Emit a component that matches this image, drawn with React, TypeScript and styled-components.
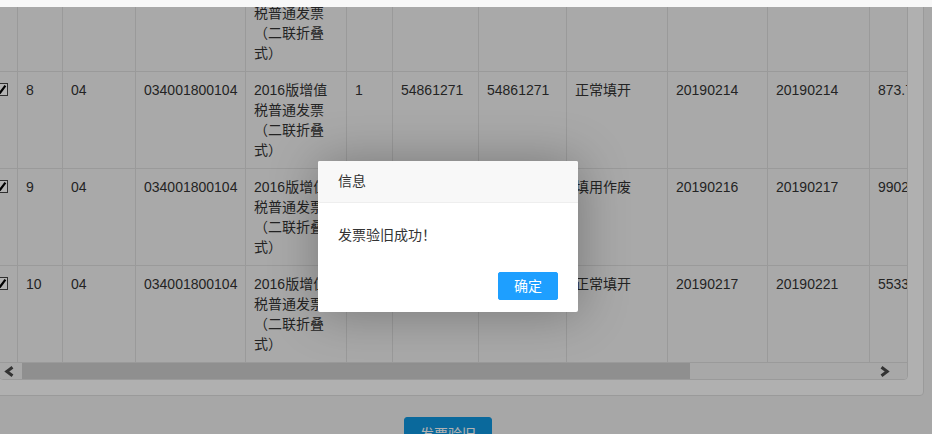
import React from 'react'
import styled, { createGlobalStyle } from 'styled-components'

const GlobalStyle = createGlobalStyle`
  * { box-sizing: border-box; }
  html, body {
    margin: 0;
    padding: 0;
    overflow: hidden;
    background: #f8f8f8;
  }
  body {
    font-family: "Liberation Sans", "Noto Sans CJK SC", sans-serif;
    font-size: 14px;
    color: #333;
    text-spacing-trim: space-all;
  }
`

const TopStrip = styled.div`
  height: 7px;
  background: #f8f8f8;
`

const Frame = styled.div`
  position: relative;
  height: 427px;
  overflow: hidden;
  background: #f0f0f0;
`

const Panel = styled.div`
  width: 941px;
  margin: -30px 0 0 -17px;
  padding: 15px;
  background: #fdfdfd;
  border: 1px solid #ddd;
  border-radius: 4px;
`

const TableBox = styled.div`
  border: 1px solid #ddd;
  border-radius: 4px;
  overflow: hidden;
  background: #fff;
`

const Viewport = styled.div`
  overflow: hidden;
`

const Grid = styled.div`
  display: grid;
  grid-template-columns: 32px 45px 73px 110px 101px 46px 86px 88px 101px 100px 102px 100px;
  width: max-content;
  margin: -19px 0 0 -14px;
`

const Cell = styled.div<{ wrap?: boolean }>`
  padding: 8px;
  line-height: 20px;
  background: #f3f3f3;
  border-right: 1px solid #ddd;
  border-bottom: 1px solid #ddd;
  white-space: ${({ wrap }) => (wrap ? 'normal' : 'nowrap')};
  overflow: hidden;
`

const CheckCell = styled(Cell)`
  padding-left: 9px;
`

const CheckBox = styled.span`
  display: block;
  width: 13px;
  height: 13px;
  margin-top: 3px;
  border: 1px solid #444;
  background: #fff;
  svg { display: block; }
`

const ScrollBar = styled.div`
  display: flex;
  height: 16px;
  background: #f1f1f1;
`

const ArrowButton = styled.div<{ width: number }>`
  display: flex;
  align-items: center;
  width: ${({ width }) => width}px;
  padding-left: 4px;
  flex: none;
  svg { display: block; }
`

const Thumb = styled.div<{ width: number }>`
  width: ${({ width }) => width}px;
  margin-left: 4px;
  background: #cdcdcd;
  flex: none;
`

const TrackRest = styled.div`
  flex: 1;
`

const Footer = styled.div`
  display: flex;
  justify-content: center;
  padding: 21px 36px 0 0;
`

const PrimaryButton = styled.button`
  height: 34px;
  padding: 0 15px;
  border: 1px solid #0f97e0;
  border-radius: 3px;
  background: #0f97e0;
  color: #fff;
  font-family: "Liberation Sans", "Noto Sans CJK SC", sans-serif;
  font-size: 14px;
  line-height: 32px;
`

const Shade = styled.div`
  position: absolute;
  inset: 0;
  background: rgba(0, 0, 0, 0.3);
`

const Dialog = styled.div`
  position: absolute;
  left: 318px;
  top: 154px;
  width: 260px;
  background: #fff;
  border-radius: 2px;
  box-shadow: 1px 1px 50px rgba(0, 0, 0, 0.3);
`

const DialogTitle = styled.div`
  height: 42px;
  line-height: 41px;
  padding: 0 80px 0 20px;
  background: #f8f8f8;
  border-bottom: 1px solid #eee;
  border-radius: 2px 2px 0 0;
  color: #333;
`

const DialogBody = styled.div`
  padding: 20px;
  line-height: 24px;
  color: #333;
`

const DialogActions = styled.div`
  display: flex;
  justify-content: flex-end;
  padding: 0 15px 12px;
`

const DialogButton = styled.button`
  height: 28px;
  margin: 5px 5px 0;
  padding: 0 15px;
  border: 1px solid #1e9fff;
  border-radius: 2px;
  background: #1e9fff;
  color: #fff;
  font-family: "Liberation Sans", "Noto Sans CJK SC", sans-serif;
  font-size: 14px;
  line-height: 26px;
`

type Row = {
  no: string
  status: string
  start: string
  end: string
  amount: string
  from: string
  to: string
}

const KIND = '2016版增值税普通发票（二联折叠式）'

const rows: Row[] = [
  { no: '7', from: '54861270', to: '54861270', status: '正常填开', start: '20190213', end: '20190214', amount: '1220.50' },
  { no: '8', from: '54861271', to: '54861271', status: '正常填开', start: '20190214', end: '20190214', amount: '873.79' },
  { no: '9', from: '54861272', to: '54861272', status: '填用作废', start: '20190216', end: '20190217', amount: '9902.91' },
  { no: '10', from: '54861273', to: '54861273', status: '正常填开', start: '20190217', end: '20190221', amount: '5533.98' }
]

function Tick() {
  return (
    <CheckBox>
      <svg width="11" height="11" viewBox="0 0 11 11">
        <path d="M1.8 5.6 L4.3 8.4 L9.4 1.6" fill="none" stroke="#000" strokeWidth="2.2" />
      </svg>
    </CheckBox>
  )
}

function Chevron({ dir }: { dir: 'left' | 'right' }) {
  const pts = dir === 'left' ? '8.5,1.2 2.8,5.5 8.5,9.8' : '1.5,1.2 7.2,5.5 1.5,9.8'
  return (
    <svg width="10" height="11" viewBox="0 0 10 11">
      <polyline points={pts} fill="none" stroke="#4a4a4a" strokeWidth="3" />
    </svg>
  )
}

export default function App() {
  return (
    <>
      <GlobalStyle />
      <TopStrip />
      <Frame>
        <Panel>
          <TableBox>
            <Viewport>
              <Grid>
                {rows.map(r => (
                  <React.Fragment key={r.no}>
                    <CheckCell><Tick /></CheckCell>
                    <Cell>{r.no}</Cell>
                    <Cell>04</Cell>
                    <Cell>034001800104</Cell>
                    <Cell wrap>{KIND}</Cell>
                    <Cell>1</Cell>
                    <Cell>{r.from}</Cell>
                    <Cell>{r.to}</Cell>
                    <Cell>{r.status}</Cell>
                    <Cell>{r.start}</Cell>
                    <Cell>{r.end}</Cell>
                    <Cell>{r.amount}</Cell>
                  </React.Fragment>
                ))}
              </Grid>
            </Viewport>
            <ScrollBar>
              <ArrowButton width={18}><Chevron dir="left" /></ArrowButton>
              <Thumb width={668} />
              <TrackRest />
              <ArrowButton width={31}><Chevron dir="right" /></ArrowButton>
            </ScrollBar>
          </TableBox>
        </Panel>
        <Footer>
          <PrimaryButton>发票验旧</PrimaryButton>
        </Footer>
        <Shade />
        <Dialog>
          <DialogTitle>信息</DialogTitle>
          <DialogBody>发票验旧成功！</DialogBody>
          <DialogActions>
            <DialogButton>确定</DialogButton>
          </DialogActions>
        </Dialog>
      </Frame>
    </>
  )
}
